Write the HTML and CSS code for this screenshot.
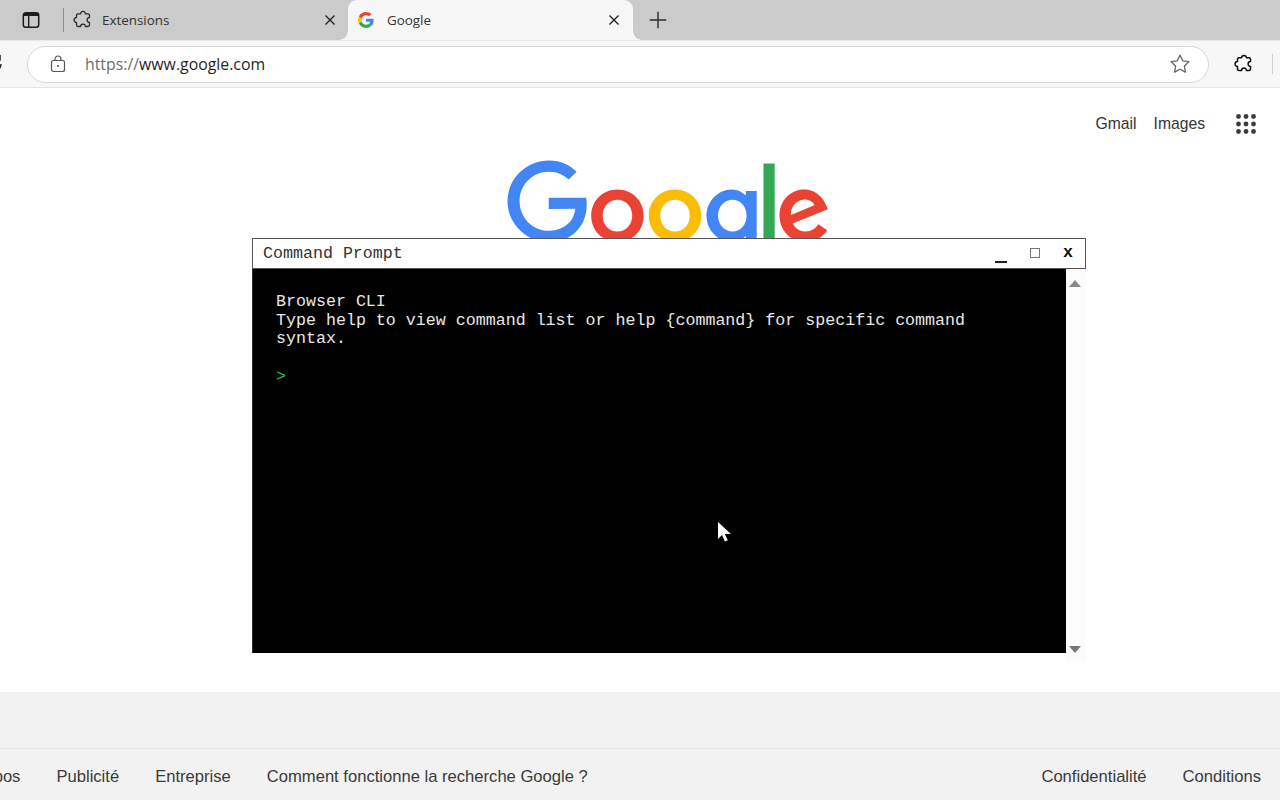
FILE: index.html
```html
<!DOCTYPE html>
<html lang="fr">
<head>
<meta charset="utf-8">
<title>Google</title>
<link rel="stylesheet" href="styles.css">
</head>
<body>
<div class="browser">
  <div class="tabbar">
    <span class="tabs-menu">
      <svg width="18" height="18" viewBox="0 0 18 18"><rect x="1.300" y="1.800" width="15.400" height="14.400" rx="2.500" fill="none" stroke="#1c1c1c" stroke-width="1.500"/><path d="M1.500 5h15V3.600a1.600 1.600 0 0 0-1.600-1.600H3.100a1.600 1.600 0 0 0-1.600 1.600zM6 5h1.400v11H6z" fill="#1c1c1c"/></svg>
    </span>
    <span class="tab-sep"></span>
    <div class="tab">
      <svg class="tab-icon" width="20" height="20" viewBox="0 0 20 20"><path d="M7.600 3.800a2.400 2.400 0 1 1 4.800 0H15a1.500 1.500 0 0 1 1.500 1.500v2.300a2.400 2.400 0 0 0 0 4.800V15a1.500 1.500 0 0 1-1.500 1.500h-2.600a2.400 2.400 0 0 0-4.800 0H5A1.500 1.500 0 0 1 3.500 15v-2.600a2.400 2.400 0 0 1 0-4.800V5.300A1.500 1.500 0 0 1 5 3.800z" fill="none" stroke="#2a2a2a" stroke-width="1.300" stroke-linejoin="round"/></svg>
      <span class="tab-title">Extensions</span>
      <svg class="tab-close" width="12" height="12" viewBox="0 0 12 12"><path d="M1.500 1.500l9 9M10.500 1.500l-9 9" stroke="#222" stroke-width="1.400" fill="none"/></svg>
    </div>
    <div class="tab tab-active">
      <svg class="tab-icon tab-icon-g" width="16" height="16" viewBox="0 0 48 48"><path fill="#EA4335" d="M24 9.500c3.500 0 6.700 1.200 9.200 3.600l6.900-6.900C35.900 2.400 30.500 0 24 0 14.600 0 6.500 5.400 2.600 13.200l8 6.200C12.400 13.700 17.700 9.500 24 9.500z"/><path fill="#4285F4" d="M47 24.500c0-1.600-.1-3.100-.4-4.500H24v9h12.900c-.6 3-2.200 5.500-4.800 7.200l7.700 6C44.300 37.500 47 31.500 47 24.500z"/><path fill="#FBBC05" d="M10.600 28.600c-.5-1.400-.8-3-.8-4.600s.3-3.200.8-4.600l-8-6.200C.9 16.500 0 20.100 0 24s.9 7.500 2.600 10.800z"/><path fill="#34A853" d="M24 48c6.500 0 11.900-2.100 15.800-5.800l-7.700-6c-2.100 1.400-4.900 2.300-8.100 2.300-6.300 0-11.600-4.200-13.400-9.900l-8 6.200C6.500 42.600 14.600 48 24 48z"/></svg>
      <span class="tab-title">Google</span>
      <svg class="tab-close" width="12" height="12" viewBox="0 0 12 12"><path d="M1.500 1.500l9 9M10.500 1.500l-9 9" stroke="#222" stroke-width="1.400" fill="none"/></svg>
    </div>
    <span class="tab-new">
      <svg width="18" height="18" viewBox="0 0 18 18"><path d="M9 .8v16.400M.8 9h16.400" stroke="#2a2a2a" stroke-width="1.400" fill="none"/></svg>
    </span>
  </div>

  <div class="toolbar">
    <svg class="reload" width="20" height="20" viewBox="0 0 20 20"><path d="M16.500 5A8 8 0 1 0 18 10" fill="none" stroke="#222" stroke-width="1.500"/><path d="M17 1v5h-5" fill="none" stroke="#222" stroke-width="1.500"/></svg>
    <div class="address">
      <svg class="lock" width="16" height="18" viewBox="0 0 16 18"><rect x="1.500" y="5.500" width="13" height="11" rx="2" fill="none" stroke="#555" stroke-width="1.200"/><path d="M5 5.500V4a3 3 0 0 1 6 0v1.500" fill="none" stroke="#555" stroke-width="1.200"/><circle cx="8" cy="11" r="1.100" fill="#555"/></svg>
      <span class="url"><span class="url-scheme">https://</span>www.google.com</span>
      <svg class="star" width="22" height="22" viewBox="0 0 22 22"><path d="M11 2.200l2.700 5.600 6.100.9-4.400 4.300 1 6.100-5.400-2.900-5.400 2.900 1-6.100-4.400-4.300 6.100-.9z" fill="none" stroke="#666" stroke-width="1.300" stroke-linejoin="round"/></svg>
    </div>
    <svg class="puzzle" width="20" height="20" viewBox="0 0 20 20"><path d="M7.600 3.800a2.400 2.400 0 1 1 4.800 0H15a1.500 1.500 0 0 1 1.500 1.500v2.300a2.400 2.400 0 0 0 0 4.800V15a1.500 1.500 0 0 1-1.500 1.500h-2.600a2.400 2.400 0 0 0-4.800 0H5A1.500 1.500 0 0 1 3.500 15v-2.600a2.400 2.400 0 0 1 0-4.800V5.300A1.500 1.500 0 0 1 5 3.800z" fill="none" stroke="#111" stroke-width="1.500" stroke-linejoin="round"/></svg>
    <span class="toolbar-sep"></span>
  </div>

  <main class="page">
    <nav class="topnav">
      <a class="topnav-link">Gmail</a>
      <a class="topnav-link">Images</a>
      <svg class="apps" width="20" height="20" viewBox="0 0 20 20" fill="#3c3c3c"><circle cx="2.500" cy="2.500" r="2.400"/><circle cx="10" cy="2.500" r="2.400"/><circle cx="17.500" cy="2.500" r="2.400"/><circle cx="2.500" cy="10" r="2.400"/><circle cx="10" cy="10" r="2.400"/><circle cx="17.500" cy="10" r="2.400"/><circle cx="2.500" cy="17.500" r="2.400"/><circle cx="10" cy="17.500" r="2.400"/><circle cx="17.500" cy="17.500" r="2.400"/></svg>
    </nav>
    <svg class="logo" width="323.600" height="108.600" viewBox="0 0 274 92" aria-label="Google">
      <path fill="#EA4335" d="M115.750 47.180c0 12.770-9.990 22.180-22.250 22.180s-22.250-9.410-22.250-22.180C71.250 34.320 81.240 25 93.500 25s22.250 9.320 22.250 22.180zm-9.740 0c0-7.980-5.790-13.440-12.510-13.440S80.990 39.200 80.990 47.180c0 7.900 5.790 13.440 12.510 13.440s12.510-5.550 12.510-13.440z"/>
      <path fill="#FBBC05" transform="translate(.8)" d="M163.750 47.180c0 12.770-9.990 22.180-22.250 22.180s-22.250-9.410-22.250-22.180c0-12.850 9.990-22.180 22.250-22.180s22.250 9.320 22.250 22.180zm-9.740 0c0-7.980-5.790-13.440-12.510-13.440s-12.510 5.460-12.510 13.440c0 7.900 5.790 13.440 12.510 13.440s12.510-5.550 12.510-13.440z"/>
      <g transform="translate(1.700)">
      <path fill="#4285F4" d="M209.750 26.340v39.820c0 16.380-9.660 23.070-21.080 23.070-10.750 0-17.220-7.190-19.660-13.070l8.480-3.530c1.510 3.610 5.210 7.870 11.170 7.870 7.310 0 11.840-4.510 11.840-13v-3.190h-.34c-2.180 2.690-6.380 5.040-11.680 5.040-11.090 0-21.250-9.660-21.250-22.090 0-12.520 10.160-22.260 21.250-22.260 5.290 0 9.490 2.350 11.680 4.960h.34v-3.610h9.250zm-8.560 20.920c0-7.810-5.210-13.520-11.840-13.520-6.720 0-12.350 5.710-12.350 13.520 0 7.730 5.630 13.360 12.350 13.360 6.630 0 11.840-5.630 11.840-13.360z"/>
      <path fill="#34A853" d="M225 3v65h-9.500V3h9.500z"/>
      <path fill="#EA4335" d="M262.020 54.480l7.560 5.040c-2.440 3.610-8.320 9.830-18.480 9.830-12.600 0-22.010-9.740-22.010-22.180 0-13.190 9.490-22.180 20.920-22.180 11.510 0 17.140 9.160 18.980 14.110l1.010 2.520-29.650 12.280c2.270 4.450 5.800 6.720 10.750 6.720 4.960 0 8.400-2.440 10.920-6.140zm-23.270-7.980l19.820-8.230c-1.090-2.770-4.370-4.700-8.230-4.700-4.950 0-11.840 4.370-11.590 12.930z"/>
      </g>
      <path fill="#4285F4" d="M35.290 41.410V32H67c.31 1.640.47 3.580.47 5.680 0 7.060-1.930 15.790-8.150 22.010-6.050 6.300-13.780 9.660-24.020 9.660C16.320 69.350.36 53.890.36 34.910.36 15.930 16.320.47 35.300.47c10.500 0 17.980 4.120 23.600 9.490l-6.640 6.640c-4.030-3.780-9.490-6.720-16.970-6.720-13.860 0-24.700 11.170-24.700 25.030 0 13.860 10.840 25.030 24.700 25.030 8.990 0 14.110-3.610 17.390-6.890 2.660-2.660 4.410-6.460 5.100-11.650l-22.490.01z"/>
    </svg>
  </main>

  <footer class="footer">
    <div class="footer-band"></div>
    <div class="footer-links">
      <div class="footer-group footer-left">
        <a>À propos</a>
        <a>Publicité</a>
        <a>Entreprise</a>
        <a>Comment fonctionne la recherche Google ?</a>
      </div>
      <div class="footer-group footer-right">
        <a>Confidentialité</a>
        <a>Conditions</a>
      </div>
    </div>
  </footer>
</div>

<section class="cmd">
  <header class="cmd-title">
    <span class="cmd-name">Command Prompt</span>
    <span class="cmd-controls">
      <span class="cmd-min"></span>
      <span class="cmd-max"></span>
      <span class="cmd-close">x</span>
    </span>
  </header>
  <div class="cmd-main">
    <div class="cmd-screen">
      <p class="cmd-line">Browser CLI</p>
      <p class="cmd-line">Type help to view command list or help {command} for specific command syntax.</p>
      <p class="cmd-prompt">&gt;</p>
      <svg class="cursor" width="16" height="22" viewBox="0 0 16 22"><path d="M1 1v17l4-4 3 6.500 2.800-1.200-3-6.300H14z" fill="#fff"/></svg>
    </div>
    <div class="cmd-scroll">
      <span class="arrow-up"></span>
      <span class="arrow-down"></span>
    </div>
  </div>
</section>
</body>
</html>
```

FILE: styles.css
```css
* { box-sizing: border-box; }
html, body { margin: 0; height: 100%; overflow: hidden; }
body { background: #fff; font-family: "Liberation Sans", Arial, sans-serif; color: #333; }
p { margin: 0; }

.browser { display: flex; flex-direction: column; width: 1280px; height: 800px; overflow: hidden; }

/* tab strip */
.tabbar { display: flex; align-items: center; height: 40px; flex: none; background: #cbcbcb; font-family: "Open Sans", "Noto Sans", sans-serif; font-size: 13.400px; color: #333; }
.tabs-menu { display: flex; margin-left: 22px; width: 18px; }
.tab-sep { width: 1px; height: 24px; margin-left: 23px; background: #8e8e8e; }
.tab { display: flex; align-items: center; width: 284px; height: 40px; padding-left: 9px; }
.tab-icon { flex: none; }
.tab-title { flex: 1; margin-left: 9px; }
.tab-close { flex: none; margin-right: 12px; }
.tab-active { position: relative; background: #f7f7f7; border-radius: 9px 9px 0 0; padding-left: 10px; width: 285px; }
.tab-active .tab-close { margin-right: 13px; }
.tab-icon-g { margin-right: 2px; }
.tab-active .tab-title { margin-left: 11px; }
.tab-active::before, .tab-active::after { content: ""; position: absolute; bottom: 0; width: 9px; height: 9px; background: radial-gradient(circle at 0 0, transparent 8.500px, #f7f7f7 9px); }
.tab-active::before { left: -9px; }
.tab-active::after { right: -9px; transform: scaleX(-1); }
.tab-new { display: flex; margin-left: 16px; }

/* toolbar */
.toolbar { display: flex; align-items: center; flex: none; height: 48px; background: #f7f7f7; border-top: 1px solid #e8e8e8; border-bottom: 1px solid #e4e4e4; }
.reload { flex: none; margin-left: -17px; }
.address { display: flex; align-items: center; width: 1182px; height: 37px; margin-left: 24px; padding: 0 17px 0 22px; background: #fff; border: 1px solid #d8d8d8; border-radius: 19px; }
.lock { flex: none; }
.url { flex: 1; margin-left: 19px; font-family: "Open Sans", "Noto Sans", sans-serif; font-size: 15.850px; color: #1f1f1f; }
.url-scheme { color: #6c6c6c; }
.star { flex: none; }
.puzzle { flex: none; margin-left: 25px; }
.toolbar-sep { width: 1px; height: 20px; margin-left: 18px; background: #cfcfcf; }

/* page */
.page { flex: 1; min-height: 0; background: #fff; }
.topnav { display: flex; align-items: center; justify-content: flex-end; height: 20px; margin-top: 26px; padding-right: 24px; font-size: 15.700px; color: #333; }
.topnav-link { margin-right: 17px; }
.topnav-link + .topnav-link { margin-right: 31px; }
.apps { flex: none; }
.logo { display: block; margin: 25.500px 0 0 506.500px; }

/* footer */
.footer { flex: none; height: 108px; background: #f2f2f2; font-size: 16.600px; color: #3a3a3a; }
.footer-band { height: 57px; border-bottom: 1px solid #e4e4e4; }
.footer-links { display: flex; justify-content: space-between; align-items: center; height: 51px; padding-top: 5px; }
.footer-group { display: flex; gap: 36px; }
.footer-left { margin-left: -46px; }
.footer-right { margin-right: 19px; }

/* command prompt window, floating over the page */
.cmd { position: absolute; left: 252px; top: 238px; width: 834px; height: 423px; display: flex; flex-direction: column; font-family: "Liberation Mono", "Courier New", monospace; font-size: 16.650px; }
.cmd-title { display: flex; align-items: center; justify-content: space-between; height: 31px; flex: none; padding: 0 10px; background: #fff; border: 1px solid #555; color: #333; }
.cmd-controls { display: flex; align-items: center; }
.cmd-min { width: 12px; height: 2px; margin-top: 17px; background: #222; }
.cmd-max { width: 10px; height: 10px; margin-left: 23px; margin-top: -2px; border: 1px solid #777; }
.cmd-close { width: 11px; margin-left: 23px; margin-right: 1px; font-weight: 700; color: #111; line-height: 1; margin-top: 0; }
.cmd-main { display: flex; flex: 1; min-height: 0; }
.cmd-screen { position: relative; width: 814px; height: 384px; flex: none; padding: 24px 100px 0 23px; background: #000; border-left: 1px solid #333; color: #e8e8e8; line-height: 18.500px; }
.cmd-prompt { margin-top: 19px; color: #2fc23f; }
.cursor { position: absolute; left: 464px; top: 252px; }
.cmd-scroll { position: relative; flex: 1; background: #fcfcfc; }
.arrow-up, .arrow-down { position: absolute; left: 3px; width: 0; height: 0; border-left: 6px solid transparent; border-right: 6px solid transparent; }
.arrow-up { top: 11px; border-bottom: 7px solid #8a8a8a; }
.arrow-down { top: 377px; border-top: 7px solid #777; }
```
